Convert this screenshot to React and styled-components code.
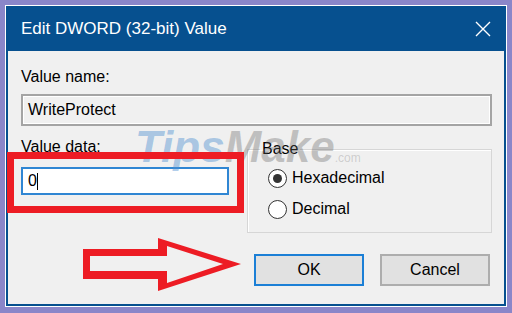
import React from 'react';
import styled, { createGlobalStyle } from 'styled-components';

const GlobalStyle = createGlobalStyle`
  * { box-sizing: border-box; }
  body {
    margin: 0;
    background: #8a86c9;
    font-family: "Liberation Sans", Arial, sans-serif;
  }
`;

const Page = styled.div`
  width: 512px;
  height: 313px;
  padding: 5px;
`;

const Window = styled.div`
  position: relative;
  width: 502px;
  height: 302px;
  border: 1px solid #ffffff;
  background: #06508f;
  display: flex;
  flex-direction: column;
  overflow: hidden;
`;

const TitleBar = styled.div`
  height: 45px;
  flex-shrink: 0;
  display: flex;
  align-items: center;
  justify-content: space-between;
  padding: 0 15px 0 15px;
  color: #ffffff;
  font-size: 17px;
  line-height: 20px;
`;

const CloseIcon = styled.svg`
  width: 16px;
  height: 16px;
  display: block;
`;

const Body = styled.div`
  flex: 1;
  margin: 0 2px 2px;
  background: #f0f0f0;
  padding: 17px 12px 0 13px;
  display: flex;
  flex-direction: column;
  font-size: 16px;
  line-height: 18px;
  color: #000;
`;

const Label = styled.div`
  height: 18px;
  white-space: nowrap;
`;

const NameBox = styled.div`
  margin-top: 8px;
  height: 32px;
  border: 2px solid #a4a4a4;
  box-shadow: inset 0 0 0 1px #ffffff;
  background: #f0f0f0;
  padding: 5px 0 0 5px;
`;

const Row = styled.div`
  margin-top: 12px;
  display: flex;
  align-items: flex-start;
  gap: 18px;
`;

const Column = styled.div`
  width: 208px;
  display: flex;
  flex-direction: column;
`;

const DataInput = styled.div`
  margin-top: 11px;
  height: 28px;
  border: 2px solid #2f86d3;
  background: #ffffff;
  padding: 0 0 0 5px;
  display: flex;
  align-items: center;
`;

const Caret = styled.span`
  display: inline-block;
  width: 1px;
  height: 17px;
  background: #000;
`;

const GroupBox = styled.fieldset`
  margin: 2px 0 0;
  width: 245px;
  min-width: 0;
  border: 1px solid #d6d6d6;
  box-shadow: inset 1px 1px 0 #ffffff;
  padding: 9px 0 12px 12px;
`;

const Legend = styled.legend`
  padding: 0 2px;
  line-height: 18px;
`;

const RadioRow = styled.label`
  display: flex;
  align-items: center;
  gap: 5px;
  height: 22px;
  margin-left: 8px;
  & + & {
    margin-top: 9px;
  }
`;

const RadioCircle = styled.span`
  width: 19px;
  height: 19px;
  border-radius: 50%;
  border: 1.5px solid #333333;
  background: #ffffff;
  display: flex;
  align-items: center;
  justify-content: center;
  &::after {
    content: '';
    width: 9px;
    height: 9px;
    border-radius: 50%;
    background: ${p => (p.$checked ? '#333333' : 'transparent')};
  }
`;

const ButtonRow = styled.div`
  margin-top: 21px;
  padding-right: 2px;
  display: flex;
  justify-content: flex-end;
  gap: 16px;
`;

const Button = styled.div`
  width: 110px;
  height: 32px;
  background: #e1e1e1;
  border: 2px solid ${p => (p.$default ? '#1b7fd6' : '#adadad')};
  display: flex;
  align-items: center;
  justify-content: center;
`;

const Highlight = styled.div`
  position: absolute;
  left: 1px;
  top: 146px;
  width: 237px;
  height: 61px;
  border: 7px solid #ed1c24;
`;

const Arrow = styled.svg`
  position: absolute;
  left: 0;
  top: 0;
  width: 500px;
  height: 300px;
  pointer-events: none;
`;

const Watermark = styled.div`
  position: absolute;
  left: 129px;
  top: 119px;
  font-size: 44px;
  line-height: 1;
  font-weight: bold;
  font-style: italic;
  letter-spacing: 0px;
  white-space: nowrap;
  pointer-events: none;
`;

const Mark = styled.span`
  color: ${p => p.$tone};
`;

const Dotcom = styled.span`
  font-size: 12px;
  font-style: normal;
  font-weight: normal;
  letter-spacing: 0;
  color: rgba(120, 120, 120, 0.3);
`;

const Radio = ({ checked, children }) => (
  <RadioRow>
    <RadioCircle $checked={checked} />
    {children}
  </RadioRow>
);

export default function App() {
  return (
    <Page>
      <GlobalStyle />
      <Window>
        <TitleBar>
          <span>Edit DWORD (32-bit) Value</span>
          <CloseIcon viewBox="0 0 16 16">
            <path d="M1 1L15 15M15 1L1 15" stroke="#fff" strokeWidth="1.4" />
          </CloseIcon>
        </TitleBar>
        <Body>
          <Label>Value name:</Label>
          <NameBox>WriteProtect</NameBox>
          <Row>
            <Column>
              <Label>Value data:</Label>
              <DataInput>
                0<Caret />
              </DataInput>
            </Column>
            <GroupBox>
              <Legend>Base</Legend>
              <Radio checked>Hexadecimal</Radio>
              <Radio>Decimal</Radio>
            </GroupBox>
          </Row>
          <ButtonRow>
            <Button $default>OK</Button>
            <Button>Cancel</Button>
          </ButtonRow>
        </Body>

        <Watermark>
          <Mark $tone="rgba(80, 145, 210, 0.45)">Tips</Mark>
          <Mark $tone="rgba(100, 100, 100, 0.35)">Make</Mark>
          <Dotcom>.com</Dotcom>
        </Watermark>
        <Highlight />
        <Arrow viewBox="0 0 500 300">
          <path
            fillRule="evenodd"
            fill="#ed1c24"
            d="M77 243H152V232L235 258L152 285V273H77Z M84 250V265H161V277L217 258L161 240V250Z"
          />
        </Arrow>
      </Window>
    </Page>
  );
}
